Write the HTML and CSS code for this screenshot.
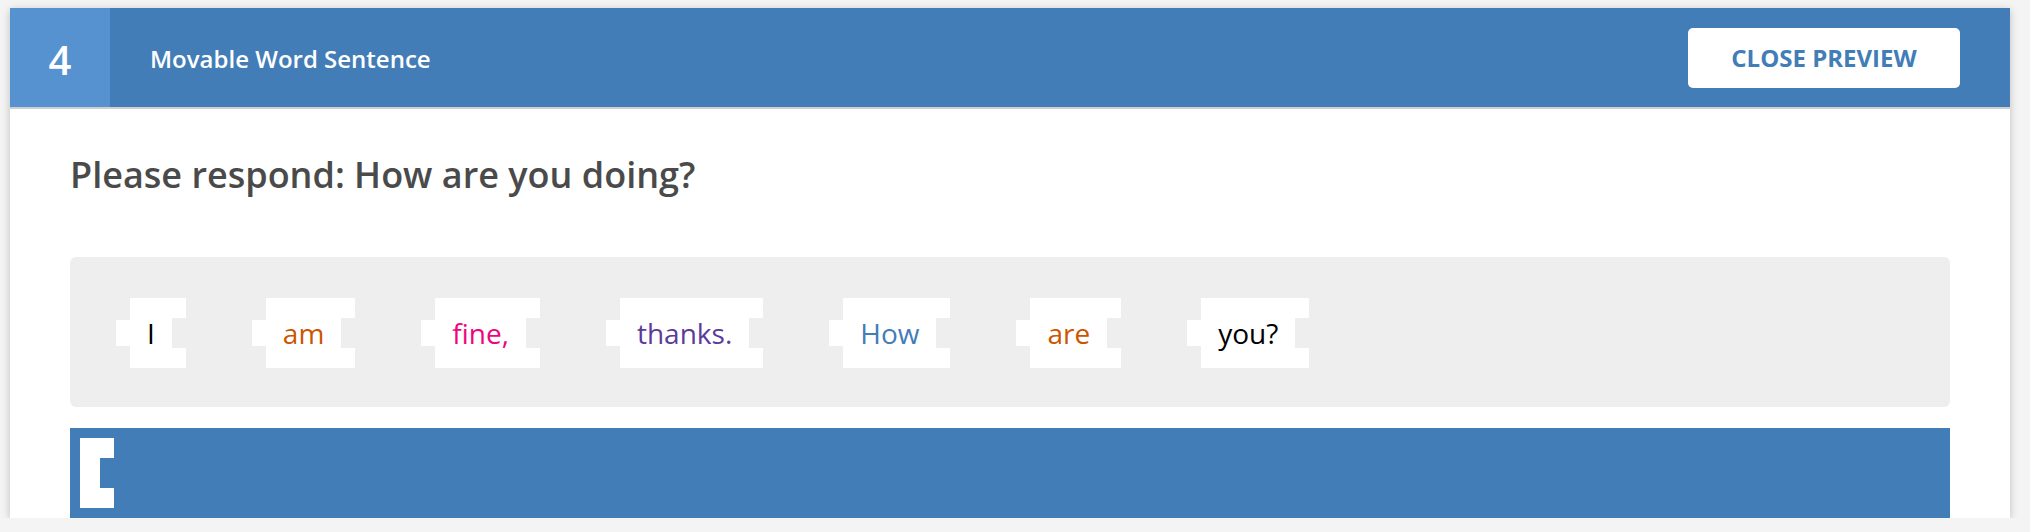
FILE: index.html
```html
<!DOCTYPE html>
<html lang="en">
<head>
<meta charset="utf-8">
<title>Movable Word Sentence</title>
<link rel="stylesheet" href="styles.css">
</head>
<body>
<div class="card">
  <div class="header">
    <div class="num">4</div>
    <div class="title">Movable Word Sentence</div>
    <button class="btn">CLOSE PREVIEW</button>
  </div>
  <div class="content">
    <h1 class="question">Please respond: How are you doing?</h1>
    <div class="bank">
      <div class="word c-black">I</div>
      <div class="word c-orange">am</div>
      <div class="word c-pink">fine,</div>
      <div class="word c-purple">thanks.</div>
      <div class="word c-blue">How</div>
      <div class="word c-orange">are</div>
      <div class="word c-black">you?</div>
    </div>
    <div class="drop">
      <div class="start"></div>
    </div>
  </div>
</div>
</body>
</html>
```
FILE: styles.css
```css
* { box-sizing: border-box; }
html, body { margin: 0; padding: 0; }
body {
  background: #f4f4f4;
  padding: 8px 0 0 10px;
  font-family: "Open Sans", "Noto Sans", sans-serif;
}
.card {
  width: 2000px;
  height: 510px;
  background: #fff;
  box-shadow: 0 2px 8px rgba(0,0,0,0.22);
  overflow: hidden;
  display: flex;
  flex-direction: column;
}
.header {
  display: flex;
  align-items: center;
  height: 101px;
  flex: none;
  background: #427db7;
  border-bottom: 2px solid #cfcfcf;
}
.num {
  width: 100px;
  align-self: stretch;
  background: #5592cf;
  color: #fff;
  font-size: 40px;
  font-weight: 600;
  display: flex;
  align-items: center;
  justify-content: center;
  padding-top: 4px;
}
.title {
  margin-left: 40px;
  color: #fff;
  font-size: 24px;
  font-weight: 600;
  padding-top: 2px;
}
.btn {
  margin-left: auto;
  margin-right: 50px;
  width: 272px;
  height: 60px;
  border: 0;
  border-radius: 5px;
  background: #fff;
  color: #427db7;
  font-family: "Open Sans", "Noto Sans", sans-serif;
  font-size: 24px;
  font-weight: 700;
  padding: 0;
}
.content {
  padding: 0 60px;
  flex: 1;
  display: flex;
  flex-direction: column;
}
.question {
  margin: 41px 0 0;
  font-size: 36px;
  font-weight: 600;
  color: #4a4a4a;
  line-height: 49px;
}
.bank {
  margin-top: 58px;
  background: #eeeeee;
  border-radius: 6px;
  height: 150px;
  padding: 41px 46px 39px;
  display: flex;
  gap: 66px;
}
.word {
  position: relative;
  margin-left: 14px;
  height: 70px;
  background: #fff;
  padding: 0 31px 0 17px;
  display: flex;
  align-items: center;
  font-size: 28px;
  font-weight: 400;
}
.word::before {
  content: "";
  position: absolute;
  left: -14px;
  top: 22px;
  width: 14px;
  height: 26px;
  background: #fff;
}
.word::after {
  content: "";
  position: absolute;
  right: 0;
  top: 20px;
  width: 14px;
  height: 30px;
  background: #eeeeee;
}
.c-black { color: #000; }
.c-orange { color: #cc5500; }
.c-pink { color: #ee0580; }
.c-purple { color: #5c3a9b; }
.c-blue { color: #427db7; }
.drop {
  margin-top: 21px;
  background: #427db7;
  padding: 10px;
  flex: 1;
}
.start {
  position: relative;
  width: 34px;
  height: 70px;
  background: #fff;
}
.start::after {
  content: "";
  position: absolute;
  right: 0;
  top: 20px;
  width: 14px;
  height: 30px;
  background: #427db7;
}
```
